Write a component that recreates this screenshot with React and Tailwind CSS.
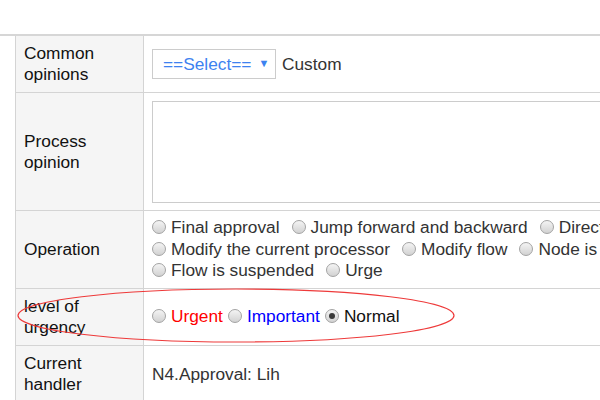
import React from 'react';

// Native-looking radio button (old Windows style)
const Radio = ({ checked = false }) => (
  <span className="relative inline-block w-[14px] h-[14px] shrink-0 rounded-full border border-[#a3a3a3] bg-linear-to-b from-[#f4f4f4] to-[#d2d2d2]">
    {checked && (
      <span className="absolute left-[3px] top-[3px] w-[6px] h-[6px] rounded-full bg-[#3a3a3a]" />
    )}
  </span>
);

const Option = ({ label, checked, className = 'text-[#333]' }) => (
  <span className="inline-flex items-start whitespace-nowrap">
    <span className="pt-[1px]">
      <Radio checked={checked} />
    </span>
    <span className={`ml-[5px] ${className}`}>{label}</span>
  </span>
);

const Row = ({ label, height, children }) => (
  <div className={`flex border-b border-[#d4d4d4] ${height}`}>
    <div className="w-[129px] shrink-0 flex items-center px-2 bg-[#f5f5f5] border-l border-r border-[#d4d4d4] text-[#111]">
      <div>{label}</div>
    </div>
    <div className="flex-1 flex items-center pl-2">{children}</div>
  </div>
);

const operationLines = [
  ['Final approval', 'Jump forward and backward', 'Direct delivery'],
  ['Modify the current processor', 'Modify flow', 'Node is skipped'],
  ['Flow is suspended', 'Urge'],
];

export default function App() {
  return (
    <div className="relative w-[600px] h-[400px] overflow-hidden bg-white font-['Liberation_Sans',Arial,sans-serif] text-[17.3px] leading-[1.2]">
      <div className="h-[34px]" />
      <div className="border-t-2 border-[#d6d6d6] pl-[15px]">
        <div className="w-[760px]">
          <Row label={<>Common<br />opinions</>} height="h-[57px]">
            <div className="flex items-center">
              <div className="w-[124px] h-[30px] border border-[#cccccc] flex items-center pl-[10px] text-[#3d82f0]">
                <span>==Select==</span>
                <span className="ml-[7px] text-[11px]">▼</span>
              </div>
              <span className="ml-[6px] text-[#333]">Custom</span>
            </div>
          </Row>

          <Row label={<>Process<br />opinion</>} height="h-[118px]">
            <div className="w-[620px] h-[102px] border border-[#cccccc] bg-white" />
          </Row>

          <Row label="Operation" height="h-[78px]">
            <div className="flex flex-col">
              {operationLines.map((line, i) => (
                <div key={i} className="flex gap-x-[12px]">
                  {line.map((item) => (
                    <Option key={item} label={item} />
                  ))}
                </div>
              ))}
            </div>
          </Row>

          <Row label={<>level of<br />urgency</>} height="h-[57px]">
            <div className="flex gap-x-[5px]">
              <Option label="Urgent" className="text-[#ff0000]" />
              <Option label="Important" className="text-[#0000ff]" />
              <Option label="Normal" checked className="text-[#111]" />
            </div>
          </Row>

          <Row label={<>Current<br />handler</>} height="h-[57px]">
            <span className="text-[#333]">N4.Approval: Lih</span>
          </Row>
        </div>
      </div>

      {/* hand-drawn annotation around the urgency row */}
      <svg className="absolute left-0 top-0 pointer-events-none" width="600" height="400">
        <ellipse cx="236" cy="315.5" rx="218" ry="26.5" fill="none" stroke="#ee3a3a" strokeWidth="1.2" />
      </svg>
    </div>
  );
}
